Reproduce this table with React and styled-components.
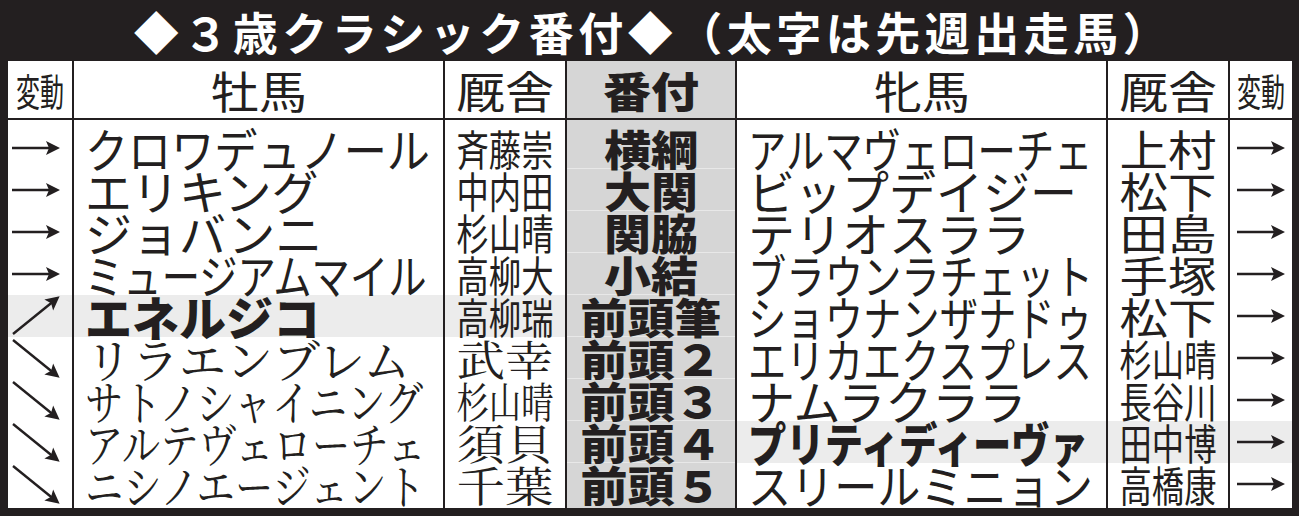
import styled, { createGlobalStyle } from 'styled-components';

const ink = '#231f20';

const GlobalStyle = createGlobalStyle`
	html, body {
		margin: 0;
		background: ${ink};
	}
	body {
		font-family: "Noto Sans CJK JP", "Noto Sans", sans-serif;
	}
`;

const left = [
	{ move: 'right', name: 'クロワデュノール', stable: '斉藤崇' },
	{ move: 'right', name: 'エリキング', stable: '中内田' },
	{ move: 'right', name: 'ジョバンニ', stable: '杉山晴' },
	{ move: 'right', name: 'ミュージアムマイル', stable: '高柳大' },
	{ move: 'up', name: 'エネルジコ', stable: '高柳瑞', bold: true },
	{ move: 'down', name: 'リラエンブレム', stable: '武幸', serif: true },
	{ move: 'down', name: 'サトノシャイニング', stable: '杉山晴', serif: true },
	{ move: 'down', name: 'アルテヴェローチェ', stable: '須貝', serif: true },
	{ move: 'down', name: 'ニシノエージェント', stable: '千葉', serif: true },
];

const ranks = ['横綱', '大関', '関脇', '小結', '前頭筆', '前頭２', '前頭３', '前頭４', '前頭５'];

const right = [
	{ move: 'right', name: 'アルマヴェローチェ', stable: '上村' },
	{ move: 'right', name: 'ビップデイジー', stable: '松下' },
	{ move: 'right', name: 'テリオスララ', stable: '田島' },
	{ move: 'right', name: 'ブラウンラチェット', stable: '手塚' },
	{ move: 'right', name: 'ショウナンザナドゥ', stable: '松下' },
	{ move: 'right', name: 'エリカエクスプレス', stable: '杉山晴' },
	{ move: 'right', name: 'ナムラクララ', stable: '長谷川' },
	{ move: 'right', name: 'プリティディーヴァ', stable: '田中博', bold: true },
	{ move: 'right', name: 'スリールミニョン', stable: '高橋康' },
];

// shrink a line of full-width text to fit a width; `stretch` lets short ones grow to it
const fitScale = (text, size, max, stretch) => {
	const s = max / ([...text].length * size);
	return stretch ? s : Math.min(1, s);
};

const Frame = styled.div`
	width: 1299px;
	height: 516px;
	box-sizing: border-box;
	padding: 0 7px 8px 8px;
	background: ${ink};
	display: flex;
	flex-direction: column;
	overflow: hidden;
`;

const TitleBar = styled.div`
	height: 61px;
	display: flex;
	align-items: center;
	justify-content: center;
	padding-left: 6px;
	padding-top: 2px;
	box-sizing: border-box;
	color: #fff;
	font-size: 45px;
	font-weight: 700;
	letter-spacing: 4.5px;
	line-height: 1;
	white-space: nowrap;
`;

const Table = styled.div`
	flex: 1;
	display: flex;
	background: #fff;
	color: ${ink};
`;

const Column = styled.div`
	width: ${(p) => p.$w}px;
	box-sizing: border-box;
	border-left: ${(p) => (p.$first ? 'none' : `2px solid ${ink}`)};
	background: ${(p) => (p.$shaded ? '#d6d6d6' : 'transparent')};
	display: flex;
	flex-direction: column;
`;

const HeadCell = styled.div`
	height: 59px;
	box-sizing: border-box;
	border-bottom: 2px solid ${ink};
	display: flex;
	align-items: center;
	justify-content: center;
	white-space: nowrap;
`;

const Body = styled.div`
	padding-top: 7px;
	display: flex;
	flex-direction: column;
`;

const Cell = styled.div`
	height: 42px;
	box-sizing: border-box;
	display: flex;
	align-items: center;
	justify-content: ${(p) => (p.$align === 'left' ? 'flex-start' : 'center')};
	padding-left: ${(p) => p.$pad || 0}px;
	background: ${(p) => (p.$hl ? '#ececec' : 'transparent')};
	border-bottom: ${(p) => (p.$rule ? '1px solid #e8e8e8' : 'none')};
	white-space: nowrap;
`;

const Fit = styled.span`
	display: inline-block;
	line-height: 42px;
	font-size: ${(p) => p.$size}px;
	font-weight: ${(p) => p.$weight || 400};
	font-family: ${(p) =>
		p.$serif
			? '"Noto Serif CJK JP", "Noto Sans CJK JP", serif'
			: '"Noto Sans CJK JP", sans-serif'};
	transform-origin: ${(p) => (p.$align === 'left' ? 'left center' : 'center center')};
`;

const Arrow = ({ dir }) => {
	const angle = dir === 'up' ? -39 : dir === 'down' ? 39 : 0;
	const len = dir === 'right' ? 48 : 60;
	const origin = dir === 'right' ? 'translate(1 20)' : dir === 'up' ? 'translate(2 38)' : 'translate(2 2)';
	return (
		<svg width="50" height="40" viewBox="0 0 50 40">
			<g transform={origin}>
				<g transform={`rotate(${angle})`}>
					<line x1="0" y1="0" x2={len - 6} y2="0" stroke={ink} strokeWidth="2.4" />
					<path d={`M${len - 14} -7 L${len} 0 L${len - 14} 7 L${len - 11} 0 Z`} fill={ink} />
				</g>
			</g>
		</svg>
	);
};

const Text = ({ children, size, max, align, weight, serif, stretch }) => (
	<Fit
		$size={size}
		$align={align}
		$weight={weight}
		$serif={serif}
		style={{ transform: `scaleX(${fitScale(children, size, max, stretch)})` }}
	>
		{children}
	</Fit>
);

const Head = ({ children, size, max, weight }) => (
	<HeadCell>
		<Text size={size} max={max} weight={weight} stretch>
			{children}
		</Text>
	</HeadCell>
);

const MoveColumn = ({ rows, first, pad }) => (
	<Column $w={64} $first={first}>
		<Head size={38} max={48} weight={400}>変動</Head>
		<Body>
			{rows.map((r, i) => (
				<Cell key={i} $hl={r.bold} $align={pad ? 'left' : 'center'} $pad={pad}>
					<Arrow dir={r.move} />
				</Cell>
			))}
		</Body>
	</Column>
);

const NameColumn = ({ title, rows, pad }) => (
	<Column $w={371}>
		<Head size={44} max={96} weight={400}>{title}</Head>
		<Body>
			{rows.map((r, i) => (
				<Cell key={i} $hl={r.bold} $align="left" $pad={pad}>
					<Text
						size={47}
						max={345}
						align="left"
						weight={r.bold ? 900 : 400}
						serif={r.serif}
					>
						{r.name}
					</Text>
				</Cell>
			))}
		</Body>
	</Column>
);

const StableColumn = ({ rows }) => (
	<Column $w={122}>
		<Head size={44} max={98} weight={400}>厩舎</Head>
		<Body>
			{rows.map((r, i) => (
				<Cell key={i} $hl={r.bold}>
					<Text size={42} max={97} weight={400} serif={r.serif} stretch>
						{r.stable}
					</Text>
				</Cell>
			))}
		</Body>
	</Column>
);

const RankColumn = () => (
	<Column $w={170} $shaded>
		<Head size={42} max={96} weight={900}>番付</Head>
		<Body>
			{ranks.map((r, i) => (
				<Cell key={r} $rule={i < ranks.length - 1}>
					<Text size={42} max={[...r].length * 47} weight={900} stretch>
						{r}
					</Text>
				</Cell>
			))}
		</Body>
	</Column>
);

export default function App() {
	return (
		<>
			<GlobalStyle />
			<Frame>
				<TitleBar>◆３歳クラシック番付◆（太字は先週出走馬）</TitleBar>
				<Table>
					<MoveColumn rows={left} first pad={3} />
					<NameColumn title="牡馬" rows={left} pad={11} />
					<StableColumn rows={left} />
					<RankColumn />
					<NameColumn title="牝馬" rows={right} pad={11} />
					<StableColumn rows={right} />
					<MoveColumn rows={right} />
				</Table>
			</Frame>
		</>
	);
}
